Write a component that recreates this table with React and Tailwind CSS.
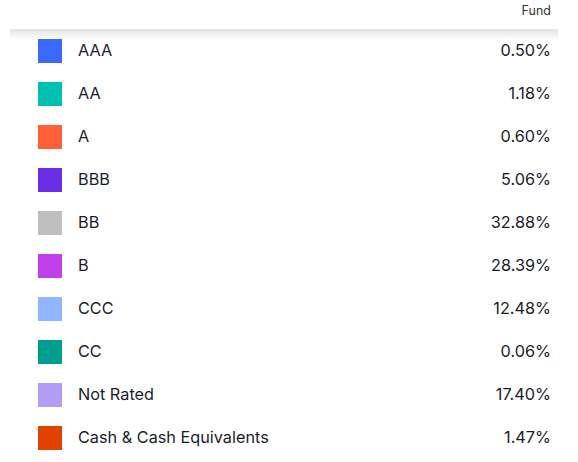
import React from "react";

const rows = [
  { label: "AAA", value: "0.50%", color: "bg-[#3b68ff]" },
  { label: "AA", value: "1.18%", color: "bg-[#00c1b1]" },
  { label: "A", value: "0.60%", color: "bg-[#ff603a]" },
  { label: "BBB", value: "5.06%", color: "bg-[#6a2ee6]" },
  { label: "BB", value: "32.88%", color: "bg-[#bfbfbf]" },
  { label: "B", value: "28.39%", color: "bg-[#c240ec]" },
  { label: "CCC", value: "12.48%", color: "bg-[#8fb6ff]" },
  { label: "CC", value: "0.06%", color: "bg-[#009e90]" },
  { label: "Not Rated", value: "17.40%", color: "bg-[#b39cf4]" },
  { label: "Cash & Cash Equivalents", value: "1.47%", color: "bg-[#e24200]" },
];

export default function App() {
  return (
    <div
      className="w-[578px] h-[462px] bg-white overflow-hidden text-[#1c1c2b]"
      style={{ fontFamily: "Inter, 'Noto Sans', sans-serif" }}
    >
      <div className="h-[29px] flex justify-end items-start pr-[27px] pt-[2px]">
        <span className="text-[12.5px] text-[#333]">Fund</span>
      </div>
      <div className="relative">
        <div className="absolute left-[10px] right-[20px] top-0 h-[11px] bg-gradient-to-b from-[#e3e3e3] to-white pointer-events-none" />
        {rows.map((r) => (
          <div key={r.label} className="relative h-[43px] flex items-center pl-[38px] pr-[27px]">
            <div className={`w-[24px] h-[24px] ${r.color}`} />
            <span className="ml-[16px] text-[16.25px] flex-1">{r.label}</span>
            <span className="text-[16.25px]">{r.value}</span>
          </div>
        ))}
      </div>
    </div>
  );
}
